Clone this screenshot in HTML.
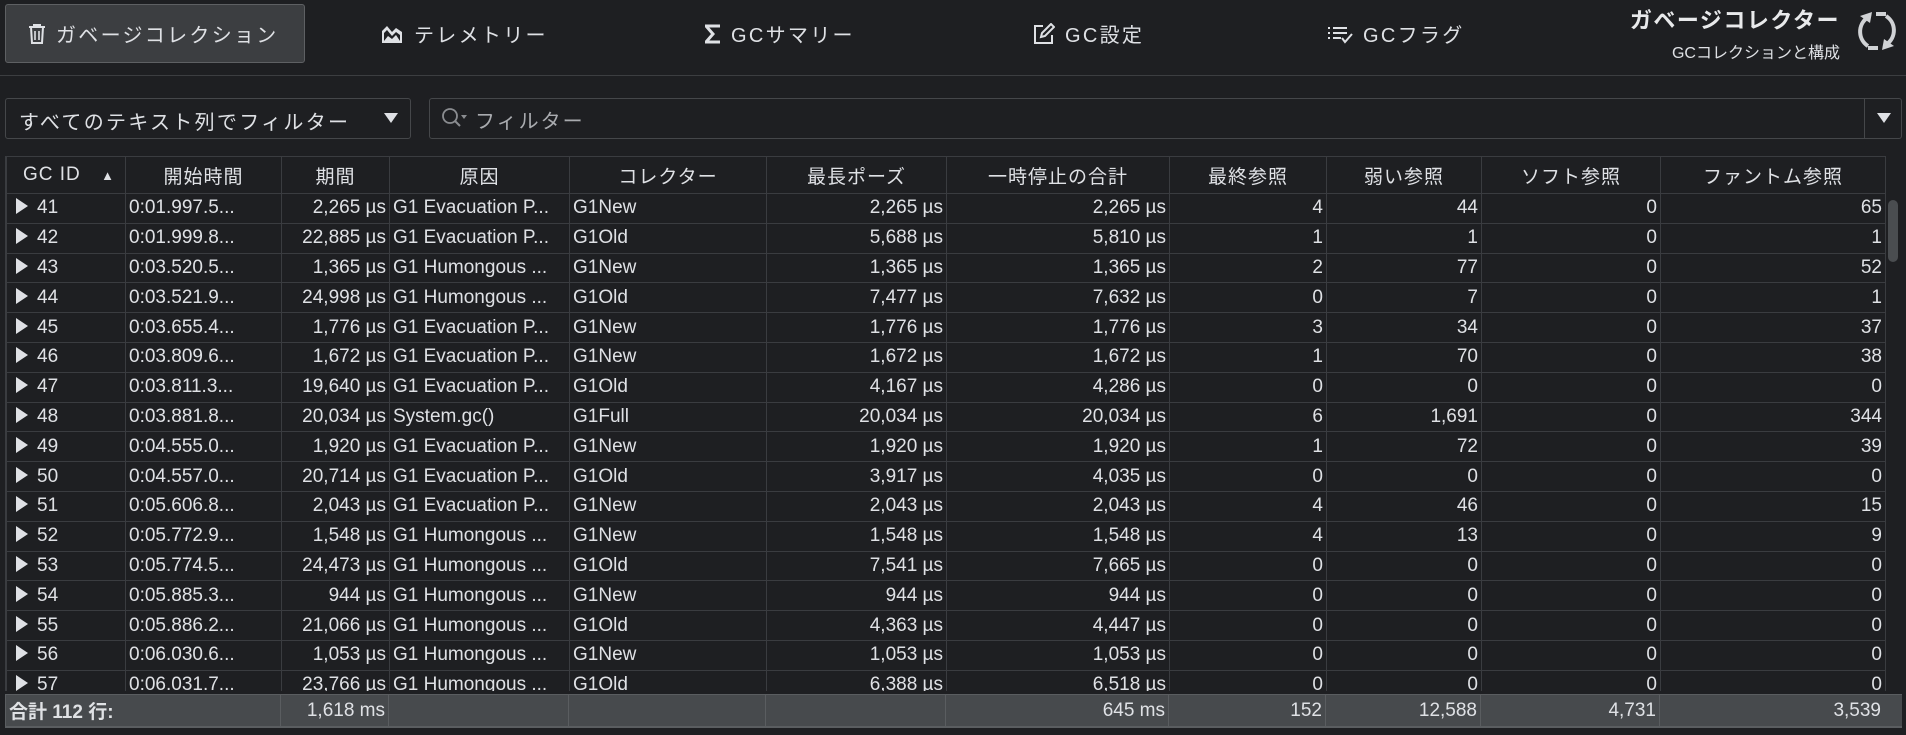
<!DOCTYPE html>
<html><head><meta charset="utf-8"><style>
*{margin:0;padding:0;box-sizing:border-box}
body{width:1906px;height:735px;background:#1e1f22;color:#dfe1e5;font-family:"Liberation Sans","Noto Sans CJK JP",sans-serif;position:relative;overflow:hidden}
.abs{position:absolute}
.tab{position:absolute;top:4px;height:59px;display:flex;align-items:center;font-size:20px;letter-spacing:2.3px;color:#dfe1e5;white-space:nowrap}
.tab svg{margin-right:10px}
.active{left:5px;width:300px;background:#3c3e41;border:1px solid #5e6063;border-radius:3px;padding-left:22px}
table{border-collapse:collapse;table-layout:fixed;font-size:19px}
td,th{border:1px solid #3a3c40;height:29.8px;padding:0 3px;white-space:nowrap;overflow:hidden}
th{height:37px;font-weight:normal;font-size:19px;letter-spacing:1px}
td.r{text-align:right}
.t{display:inline-block;width:0;height:0;border-left:12px solid #dfe1e5;border-top:8px solid transparent;border-bottom:8px solid transparent;margin:0 9px 0 6px;vertical-align:-1px}
.f td{background:#474a4d;height:32px;border-color:#5a5d60}
</style></head><body>
<div class="tab active"><svg width="18" height="22" viewBox="0 0 18 22"><path d="M1 4h16M6 4V2h6v2M3 4l1 16h10l1-16" fill="none" stroke="#dfe1e5" stroke-width="2"/><path d="M7 8v9M11 8v9" stroke="#dfe1e5" stroke-width="1.6"/></svg>ガベージコレクション</div>
<div class="tab" style="left:380px"><svg width="24" height="22" viewBox="0 0 24 22"><path d="M2 20V8l5-5 5 6 4-4 6 4v11z" fill="#dfe1e5"/><path d="M4 18v-8l3-3 5 6 4-4 4 3v6z" fill="#1e1f22"/><path d="M4 18l4-5 4 3 4-4 4 6z" fill="#dfe1e5"/></svg>テレメトリー</div>
<div class="tab" style="left:705px"><svg width="16" height="20" viewBox="0 0 16 20"><path d="M15 2H1l7 8-7 8h14" fill="none" stroke="#dfe1e5" stroke-width="3"/></svg>GCサマリー</div>
<div class="tab" style="left:1033px"><svg width="22" height="22" viewBox="0 0 22 22"><path d="M10 3H2v17h17v-8" fill="none" stroke="#dfe1e5" stroke-width="2"/><path d="M8 14l1-4 9-9 3 3-9 9z" fill="none" stroke="#dfe1e5" stroke-width="2"/></svg>GC設定</div>
<div class="tab" style="left:1327px"><svg width="26" height="20" viewBox="0 0 26 20"><path d="M1 4h2M6 4h14M1 9h2M6 9h14M1 14h2M6 14h8" stroke="#dfe1e5" stroke-width="2"/><path d="M15 14l3 4 7-8" fill="none" stroke="#dfe1e5" stroke-width="2"/></svg>GCフラグ</div>
<div class="abs" style="left:1580px;top:3px;width:260px;text-align:right;font-size:22px;font-weight:bold;letter-spacing:1.5px;color:#e8e9eb">ガベージコレクター</div>
<div class="abs" style="left:1660px;top:39px;width:180px;text-align:right;font-size:16px;color:#dfe1e5">GCコレクションと構成</div>
<svg class="abs" style="left:1854px;top:6px" width="46" height="50" viewBox="0 0 46 50"><path d="M13 12A17 17 0 0 0 14 40" fill="none" stroke="#d0d2d5" stroke-width="4"/><path d="M33 38A17 17 0 0 0 32 10" fill="none" stroke="#d0d2d5" stroke-width="4"/><path d="M6 10l12-4-2 11z" fill="#d0d2d5"/><path d="M40 40l-12 4 2-11z" fill="#d0d2d5"/><path d="M22 8h10" stroke="#d0d2d5" stroke-width="4"/><path d="M24 42H14" stroke="#d0d2d5" stroke-width="4"/></svg>
<div class="abs" style="left:0;top:75px;width:1906px;height:1px;background:#3c3e41"></div>
<div class="abs" style="left:5px;top:98px;width:406px;height:41px;border:1px solid #45474a;border-radius:3px;font-size:20px;letter-spacing:2.3px;padding:7px 0 0 13px">すべてのテキスト列でフィルター</div>
<svg class="abs" style="left:384px;top:113px" width="14" height="10"><path d="M0 0h14L7 10z" fill="#dfe1e5"/></svg>
<div class="abs" style="left:429px;top:98px;width:1473px;height:41px;border:1px solid #45474a;border-radius:3px"></div>
<div class="abs" style="left:1864px;top:99px;width:1px;height:39px;background:#45474a"></div>
<svg class="abs" style="left:1877px;top:113px" width="14" height="10"><path d="M0 0h14L7 10z" fill="#dfe1e5"/></svg>
<svg class="abs" style="left:440px;top:106px" width="30" height="24"><circle cx="10" cy="10" r="7" fill="none" stroke="#8a8c90" stroke-width="1.8"/><path d="M15 15l5 5" stroke="#8a8c90" stroke-width="2"/><path d="M21 9h6l-3 4z" fill="#8a8c90"/></svg>
<div class="abs" style="left:475px;top:105px;font-size:20px;letter-spacing:2px;color:#a9abaf">フィルター</div>
<div class="abs" style="left:5px;top:156px;width:1897px;height:535px;overflow:hidden;border-left:1px solid #3a3c40">
<table style="width:1879px">
<colgroup><col style="width:119px"><col style="width:156px"><col style="width:108px"><col style="width:180px"><col style="width:197px"><col style="width:180px"><col style="width:223px"><col style="width:157px"><col style="width:155px"><col style="width:179px"><col style="width:225px"></colgroup>
<tr><th style="text-align:left;padding-left:16px">GC ID <span style="font-size:13px;margin-left:14px">▲</span></th><th>開始時間</th><th>期間</th><th>原因</th><th>コレクター</th><th>最長ポーズ</th><th>一時停止の合計</th><th>最終参照</th><th>弱い参照</th><th>ソフト参照</th><th>ファントム参照</th></tr>
<tr><td><i class="t"></i>41</td><td>0:01.997.5...</td><td class="r">2,265 µs</td><td>G1 Evacuation P...</td><td>G1New</td><td class="r">2,265 µs</td><td class="r">2,265 µs</td><td class="r">4</td><td class="r">44</td><td class="r">0</td><td class="r">65</td></tr>
<tr><td><i class="t"></i>42</td><td>0:01.999.8...</td><td class="r">22,885 µs</td><td>G1 Evacuation P...</td><td>G1Old</td><td class="r">5,688 µs</td><td class="r">5,810 µs</td><td class="r">1</td><td class="r">1</td><td class="r">0</td><td class="r">1</td></tr>
<tr><td><i class="t"></i>43</td><td>0:03.520.5...</td><td class="r">1,365 µs</td><td>G1 Humongous ...</td><td>G1New</td><td class="r">1,365 µs</td><td class="r">1,365 µs</td><td class="r">2</td><td class="r">77</td><td class="r">0</td><td class="r">52</td></tr>
<tr><td><i class="t"></i>44</td><td>0:03.521.9...</td><td class="r">24,998 µs</td><td>G1 Humongous ...</td><td>G1Old</td><td class="r">7,477 µs</td><td class="r">7,632 µs</td><td class="r">0</td><td class="r">7</td><td class="r">0</td><td class="r">1</td></tr>
<tr><td><i class="t"></i>45</td><td>0:03.655.4...</td><td class="r">1,776 µs</td><td>G1 Evacuation P...</td><td>G1New</td><td class="r">1,776 µs</td><td class="r">1,776 µs</td><td class="r">3</td><td class="r">34</td><td class="r">0</td><td class="r">37</td></tr>
<tr><td><i class="t"></i>46</td><td>0:03.809.6...</td><td class="r">1,672 µs</td><td>G1 Evacuation P...</td><td>G1New</td><td class="r">1,672 µs</td><td class="r">1,672 µs</td><td class="r">1</td><td class="r">70</td><td class="r">0</td><td class="r">38</td></tr>
<tr><td><i class="t"></i>47</td><td>0:03.811.3...</td><td class="r">19,640 µs</td><td>G1 Evacuation P...</td><td>G1Old</td><td class="r">4,167 µs</td><td class="r">4,286 µs</td><td class="r">0</td><td class="r">0</td><td class="r">0</td><td class="r">0</td></tr>
<tr><td><i class="t"></i>48</td><td>0:03.881.8...</td><td class="r">20,034 µs</td><td>System.gc()</td><td>G1Full</td><td class="r">20,034 µs</td><td class="r">20,034 µs</td><td class="r">6</td><td class="r">1,691</td><td class="r">0</td><td class="r">344</td></tr>
<tr><td><i class="t"></i>49</td><td>0:04.555.0...</td><td class="r">1,920 µs</td><td>G1 Evacuation P...</td><td>G1New</td><td class="r">1,920 µs</td><td class="r">1,920 µs</td><td class="r">1</td><td class="r">72</td><td class="r">0</td><td class="r">39</td></tr>
<tr><td><i class="t"></i>50</td><td>0:04.557.0...</td><td class="r">20,714 µs</td><td>G1 Evacuation P...</td><td>G1Old</td><td class="r">3,917 µs</td><td class="r">4,035 µs</td><td class="r">0</td><td class="r">0</td><td class="r">0</td><td class="r">0</td></tr>
<tr><td><i class="t"></i>51</td><td>0:05.606.8...</td><td class="r">2,043 µs</td><td>G1 Evacuation P...</td><td>G1New</td><td class="r">2,043 µs</td><td class="r">2,043 µs</td><td class="r">4</td><td class="r">46</td><td class="r">0</td><td class="r">15</td></tr>
<tr><td><i class="t"></i>52</td><td>0:05.772.9...</td><td class="r">1,548 µs</td><td>G1 Humongous ...</td><td>G1New</td><td class="r">1,548 µs</td><td class="r">1,548 µs</td><td class="r">4</td><td class="r">13</td><td class="r">0</td><td class="r">9</td></tr>
<tr><td><i class="t"></i>53</td><td>0:05.774.5...</td><td class="r">24,473 µs</td><td>G1 Humongous ...</td><td>G1Old</td><td class="r">7,541 µs</td><td class="r">7,665 µs</td><td class="r">0</td><td class="r">0</td><td class="r">0</td><td class="r">0</td></tr>
<tr><td><i class="t"></i>54</td><td>0:05.885.3...</td><td class="r">944 µs</td><td>G1 Humongous ...</td><td>G1New</td><td class="r">944 µs</td><td class="r">944 µs</td><td class="r">0</td><td class="r">0</td><td class="r">0</td><td class="r">0</td></tr>
<tr><td><i class="t"></i>55</td><td>0:05.886.2...</td><td class="r">21,066 µs</td><td>G1 Humongous ...</td><td>G1Old</td><td class="r">4,363 µs</td><td class="r">4,447 µs</td><td class="r">0</td><td class="r">0</td><td class="r">0</td><td class="r">0</td></tr>
<tr><td><i class="t"></i>56</td><td>0:06.030.6...</td><td class="r">1,053 µs</td><td>G1 Humongous ...</td><td>G1New</td><td class="r">1,053 µs</td><td class="r">1,053 µs</td><td class="r">0</td><td class="r">0</td><td class="r">0</td><td class="r">0</td></tr>
<tr><td><i class="t"></i>57</td><td>0:06.031.7...</td><td class="r">23,766 µs</td><td>G1 Humongous ...</td><td>G1Old</td><td class="r">6,388 µs</td><td class="r">6,518 µs</td><td class="r">0</td><td class="r">0</td><td class="r">0</td><td class="r">0</td></tr>
</table>
</div>
<div class="abs" style="left:1888px;top:200px;width:10px;height:62px;background:#4a4d50;border-radius:5px"></div>
<div class="abs" style="left:5px;top:694px;width:1897px;height:33px;background:#474a4d;overflow:hidden">
<table style="width:1897px;font-size:19px"><colgroup><col style="width:275px"><col style="width:108px"><col style="width:180px"><col style="width:197px"><col style="width:180px"><col style="width:223px"><col style="width:157px"><col style="width:155px"><col style="width:179px"><col style="width:243px"></colgroup>
<tr class="f"><td style="font-weight:bold;color:#e0e2e5">合計 112 行:</td><td class="r">1,618 ms</td><td></td><td></td><td></td><td class="r">645 ms</td><td class="r">152</td><td class="r">12,588</td><td class="r">4,731</td><td class="r" style="padding-right:21px">3,539</td></tr></table>
</div>
<div class="abs" style="left:5px;top:727px;width:1897px;height:1px;background:#5a5d60"></div>
</body></html>
